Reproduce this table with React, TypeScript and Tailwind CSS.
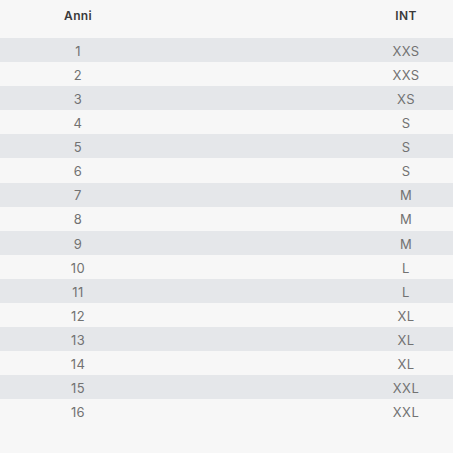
import React from "react";

const rows: [string, string][] = [
  ["1", "XXS"],
  ["2", "XXS"],
  ["3", "XS"],
  ["4", "S"],
  ["5", "S"],
  ["6", "S"],
  ["7", "M"],
  ["8", "M"],
  ["9", "M"],
  ["10", "L"],
  ["11", "L"],
  ["12", "XL"],
  ["13", "XL"],
  ["14", "XL"],
  ["15", "XXL"],
  ["16", "XXL"],
];

export default function App() {
  return (
    <div
      className="w-[453px] h-[453px] bg-[#f7f7f7] overflow-hidden"
      style={{ fontFamily: "Inter, 'Noto Sans', sans-serif" }}
    >
      <div className="grid grid-cols-[156px_1fr_94px] h-[38px] pt-[7px] text-[12px] font-semibold text-[#3a3a3a] tracking-[0.3px]">
        <div className="text-center">Anni</div>
        <div />
        <div className="text-center">INT</div>
      </div>
      {rows.map(([a, b], i) => (
        <div
          key={a}
          className={
            "grid grid-cols-[156px_1fr_94px] h-[24.1px] pt-[3px] items-center text-[13px] text-[#727272] tracking-[0.4px] " +
            (i % 2 === 0 ? "bg-[#e5e7ea]" : "bg-[#f7f7f7]")
          }
        >
          <div className="text-center">{a}</div>
          <div />
          <div className="text-center">{b}</div>
        </div>
      ))}
    </div>
  );
}
